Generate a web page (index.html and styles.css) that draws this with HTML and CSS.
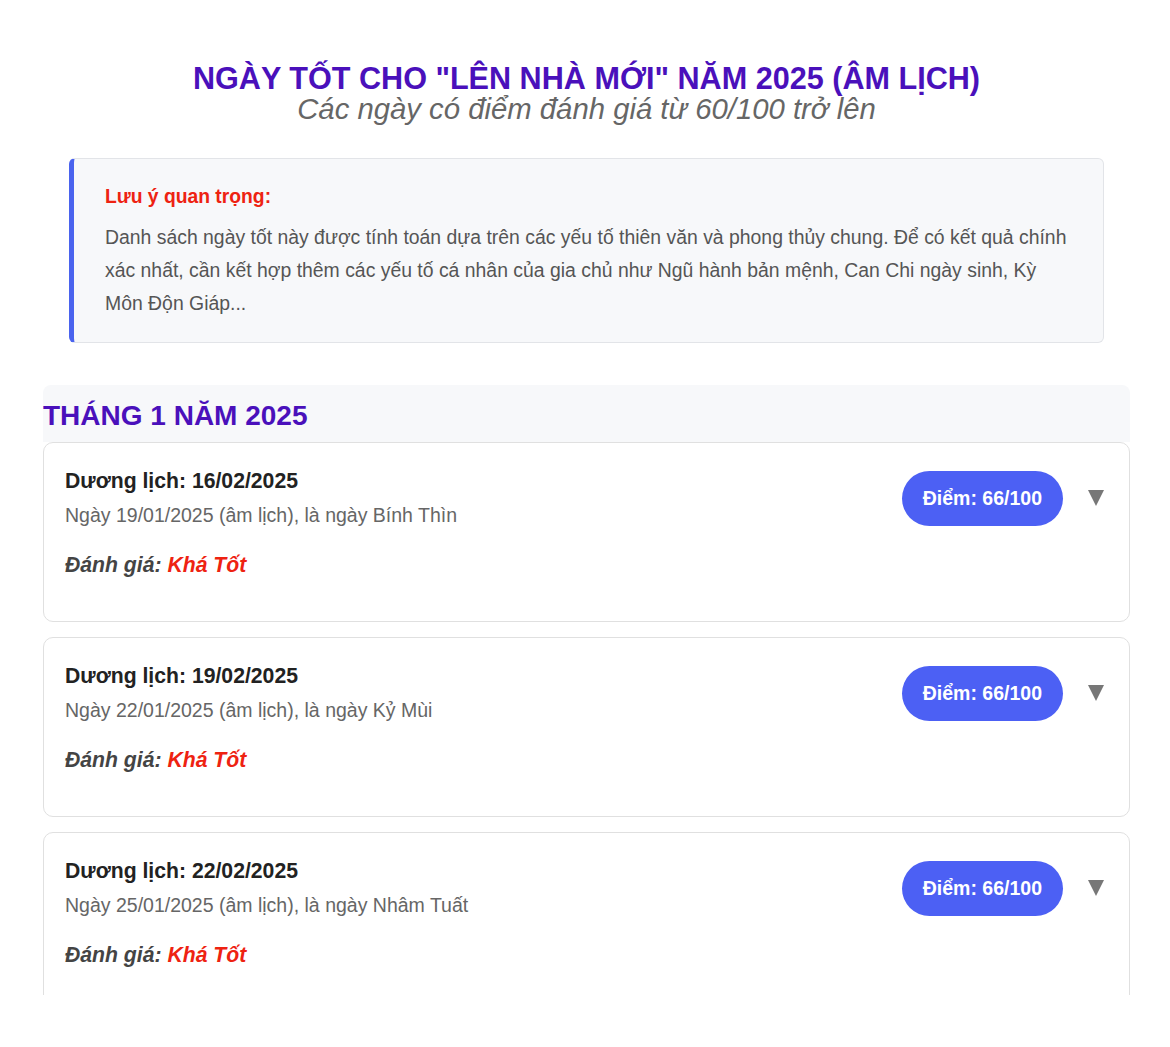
FILE: index.html
```html
<!DOCTYPE html>
<html lang="vi">
<head>
<meta charset="utf-8">
<title>Ngày tốt lên nhà mới 2025</title>
<link rel="stylesheet" href="styles.css">
</head>
<body>
<div class="page">
  <header class="header">
    <h1 class="title">NGÀY TỐT CHO "LÊN NHÀ MỚI" NĂM 2025 (ÂM LỊCH)</h1>
    <p class="subtitle">Các ngày có điểm đánh giá từ 60/100 trở lên</p>
  </header>

  <div class="notice">
    <p class="notice-title">Lưu ý quan trọng:</p>
    <p class="notice-body">Danh sách ngày tốt này được tính toán dựa trên các yếu tố thiên văn và phong thủy chung. Để có kết quả chính xác nhất, cần kết hợp thêm các yếu tố cá nhân của gia chủ như Ngũ hành bản mệnh, Can Chi ngày sinh, Kỳ Môn Độn Giáp...</p>
  </div>

  <section class="month">
    <h2 class="month-title">THÁNG 1 NĂM 2025</h2>

    <div class="card">
      <div class="card-head">
        <div class="card-info">
          <div class="solar">Dương lịch: 16/02/2025</div>
          <div class="lunar">Ngày 19/01/2025 (âm lịch), là ngày Bính Thìn</div>
        </div>
        <div class="card-side">
          <span class="badge">Điểm: 66/100</span>
          <span class="toggle"></span>
        </div>
      </div>
      <div class="rating">Đánh giá: <span class="rating-value">Khá Tốt</span></div>
    </div>

    <div class="card">
      <div class="card-head">
        <div class="card-info">
          <div class="solar">Dương lịch: 19/02/2025</div>
          <div class="lunar">Ngày 22/01/2025 (âm lịch), là ngày Kỷ Mùi</div>
        </div>
        <div class="card-side">
          <span class="badge">Điểm: 66/100</span>
          <span class="toggle"></span>
        </div>
      </div>
      <div class="rating">Đánh giá: <span class="rating-value">Khá Tốt</span></div>
    </div>

    <div class="card">
      <div class="card-head">
        <div class="card-info">
          <div class="solar">Dương lịch: 22/02/2025</div>
          <div class="lunar">Ngày 25/01/2025 (âm lịch), là ngày Nhâm Tuất</div>
        </div>
        <div class="card-side">
          <span class="badge">Điểm: 66/100</span>
          <span class="toggle"></span>
        </div>
      </div>
      <div class="rating">Đánh giá: <span class="rating-value">Khá Tốt</span></div>
    </div>
  </section>
</div>
</body>
</html>
```

FILE: styles.css
```css
* { box-sizing: border-box; }

html, body {
  margin: 0;
  background: #ffffff;
}

body {
  font-family: "Liberation Sans", Arial, sans-serif;
  color: #333;
}

.page {
  height: 995px;
  overflow: hidden;
  padding: 64px 40px 0 43px;
}

.header {
  text-align: center;
}

.title {
  margin: 0;
  font-size: 30.6px;
  line-height: 28px;
  font-weight: 700;
  color: #4a10bb;
}

.subtitle {
  margin: 2px 0 0 0;
  font-size: 29.3px;
  line-height: 29px;
  font-style: italic;
  color: #666;
}

.notice {
  margin: 35px 26px 0 26px;
  background: #f7f8fa;
  border: 1px solid #e2e4e8;
  border-left: 5px solid #4a63ee;
  border-radius: 6px;
  padding: 22px 24px 22px 31px;
}

.notice-title {
  margin: 0;
  font-size: 19.3px;
  line-height: 31px;
  font-weight: 700;
  color: #ee2211;
}

.notice-body {
  margin: 9px 0 0 0;
  font-size: 19.4px;
  line-height: 33px;
  color: #555;
}

.month {
  margin-top: 42px;
}

.month-title {
  margin: 0;
  background: #f7f8fa;
  border-radius: 8px 8px 0 0;
  padding-top: 5px;
  font-size: 28px;
  line-height: 52px;
  font-weight: 700;
  color: #4a10bb;
}

.card {
  background: #fff;
  border: 1px solid #e0e0e0;
  border-radius: 10px;
  padding: 23px 24px 41px 21px;
  margin-bottom: 15px;
}

.card-head {
  display: flex;
  align-items: center;
  justify-content: space-between;
}

.solar {
  font-size: 21.2px;
  line-height: 30px;
  font-weight: 700;
  color: #222;
}

.lunar {
  margin-top: 4px;
  font-size: 19.5px;
  line-height: 30px;
  color: #666;
}

.card-side {
  display: flex;
  align-items: center;
  gap: 25px;
}

.badge {
  display: inline-block;
  height: 55px;
  line-height: 55px;
  padding: 0 21px;
  border-radius: 28px;
  background: #4c60f4;
  color: #fff;
  font-size: 19.5px;
  font-weight: 700;
}

.toggle {
  width: 0;
  height: 0;
  border-left: 8.5px solid transparent;
  border-right: 8.5px solid transparent;
  border-top: 16px solid #777;
  margin-right: 1px;
}

.rating {
  margin-top: 20px;
  font-size: 21.2px;
  line-height: 30px;
  font-weight: 700;
  font-style: italic;
  color: #444;
}

.rating-value {
  color: #ee2211;
}
```
